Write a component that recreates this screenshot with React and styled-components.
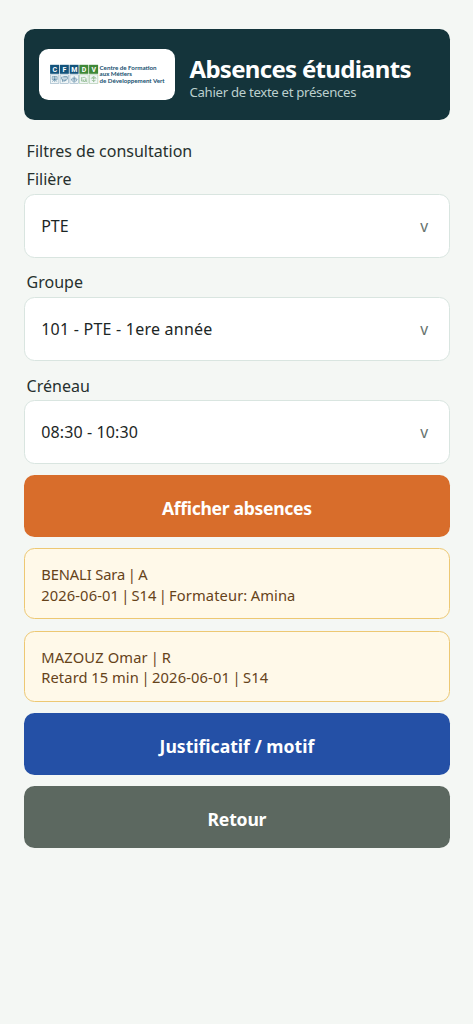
import React from 'react';
import styled, { createGlobalStyle } from 'styled-components';

const GlobalStyle = createGlobalStyle`
    * {
        box-sizing: border-box;
    }
    body {
        margin: 0;
        background: #f4f7f4;
        font-family: 'Noto Sans', 'Open Sans', sans-serif;
    }
`;

const Page = styled.main`
    min-height: 1024px;
    padding: 29px 23.4px 0 24.2px;
`;

const Header = styled.header`
    display: flex;
    align-items: center;
    gap: 14.3px;
    height: 90.6px;
    padding: 0 14.6px;
    border-radius: 10.5px;
    background: #14343b;
`;

const LogoBox = styled.div`
    display: flex;
    flex: none;
    width: 136.4px;
    height: 51.5px;
    border-radius: 9.5px;
    background: #fff;
`;

const Title = styled.h1`
    margin: 0;
    font-size: 24px;
    line-height: 28px;
    font-weight: 700;
    color: #fff;
    white-space: nowrap;
    letter-spacing: -0.7px;
`;

const Subtitle = styled.p`
    margin: 0;
    font-size: 13.2px;
    line-height: 18px;
    color: #bcd0ce;
    white-space: nowrap;
    letter-spacing: -0.31px;
`;

const HeaderText = styled.div`
    padding-top: 8px;
`;

const SectionTitle = styled.h2`
    margin: 17.8px 0 0 2.4px;
    font-size: 16px;
    line-height: 28px;
    font-weight: 400;
    color: #26302e;
`;

const Label = styled.div`
    margin-left: 2.4px;
    height: 28.7px;
    font-size: 16px;
    line-height: 28px;
    color: #26302e;
`;

const Field = styled.div`
    margin-bottom: 10.8px;
`;

const SelectBox = styled.div`
    display: flex;
    justify-content: space-between;
    align-items: center;
    height: 63.6px;
    padding: 0 20.5px 0 16px;
    border: 1.3px solid #d9e5e0;
    border-radius: 10.5px;
    background: #fff;
    font-size: 16px;
    letter-spacing: ${(props) => props.$spacing}px;
    color: #1c2625;
`;

const Arrow = styled.span`
    color: #66736f;
    font-size: 15.5px;
    letter-spacing: 0;
`;

const Actions = styled.section`
    display: flex;
    flex-direction: column;
    gap: 11.3px;
    padding-top: 0.6px;
`;

const Button = styled.button`
    width: 100%;
    height: 61.6px;
    padding: 4px 0 0;
    border: 0;
    border-radius: 10.5px;
    background: ${(props) => props.color};
    color: #fff;
    font-family: inherit;
    font-size: 17.6px;
    font-weight: 700;
    letter-spacing: ${(props) => props.$spacing || 0}px;
`;

const AbsenceCard = styled.article`
    height: 71.2px;
    padding: 15.2px 16px 0;
    border: 1.3px solid #edc873;
    border-radius: 10.5px;
    background: #fff9e9;
    color: #66431a;
    font-size: 14.7px;
    line-height: 20.5px;
`;

const AbsenceLine = styled.div`
    letter-spacing: ${(props) => props.$letter}px;
    word-spacing: ${(props) => props.$word}px;
`;

const Pipe = styled.span`
    margin: 0 -1.2px;
`;

const filters = [
    { label: 'Filière', value: 'PTE', spacing: 0 },
    { label: 'Groupe', value: '101 - PTE - 1ere année', spacing: 0.23 },
    { label: 'Créneau', value: '08:30 - 10:30', spacing: 0.12 },
];

const absences = [
    [
        { parts: ['BENALI Sara', 'A'], letter: -0.1, word: 0 },
        { parts: ['2026-06-01', 'S14', 'Formateur: Amina'], letter: 0.12, word: -0.7 },
    ],
    [
        { parts: ['MAZOUZ Omar', 'R'], letter: 0.16, word: 0 },
        { parts: ['Retard 15 min', '2026-06-01', 'S14'], letter: 0.12, word: -0.3 },
    ],
];

const tiles = [
    { letter: 'C', color: '#14547c' },
    { letter: 'F', color: '#14547c' },
    { letter: 'M', color: '#14547c' },
    { letter: 'D', color: '#3f8838' },
    { letter: 'V', color: '#3f8838' },
];

// small pictograms under each letter
const pictograms = [
    'M1.5 1.5h5v3h-5zM4 1v6M1.5 6.5l2.5-2 2.5 2M2 3h4',
    'M1 2h6v2H1zM2 4v3M6 4l-3 3M3 1.5h4M2 5.5h4',
    'M1 4h6l-1 2H2zM4 1v5M2 3h4M3 7h2',
    'M1.5 2v4h3M2 3c3-2 5 0 4 3-2 1-3 0-3-2M5 4l2 3',
    'M4 7V2M1.5 3.5L4 1l2.5 2.5M2 5l2 1 2-1M2 3h4',
];

const Logo = () => (
    <svg width='136.4' height='51.5' viewBox='39 48.5 136.4 51.5'>
        {tiles.map((tile, index) => (
            <g key={tile.letter} transform={`translate(${50.1 + index * 9.75} 64.3)`}>
                <rect width='9' height='9' fill={tile.color} />
                <text x='4.6' y='7' textAnchor='middle' fontFamily='Roboto, sans-serif' fontSize='7' fontWeight='700' fill='#fff'>
                    {tile.letter}
                </text>
                <rect x='0.3' y='10' width='8.5' height='8.7' fill='#f1f6f7' stroke={tile.color} strokeOpacity='0.45' strokeWidth='0.6' />
                <path d={pictograms[index]} transform='translate(0.6 10.3)' fill='none' stroke={tile.color} strokeOpacity='0.6' strokeWidth='0.7' />
            </g>
        ))}
        <g fontFamily='Lato, sans-serif' fontSize='6.3' fontWeight='700' fill='#16506f'>
            <text x='99.6' y='69.3' textLength='57' lengthAdjust='spacingAndGlyphs'>Centre de Formation</text>
            <text x='99.6' y='75.7' textLength='32.4' lengthAdjust='spacingAndGlyphs'>aux Métiers</text>
            <text x='99.6' y='82.3' textLength='65' lengthAdjust='spacingAndGlyphs'>de Développement Vert</text>
        </g>
    </svg>
);

const Select = ({ label, value, spacing }) => (
    <Field>
        <Label>{label}</Label>
        <SelectBox $spacing={spacing}>
            <span>{value}</span>
            <Arrow>v</Arrow>
        </SelectBox>
    </Field>
);

const App = () => {
    return (
        <Page>
            <GlobalStyle />
            <Header>
                <LogoBox>
                    <Logo />
                </LogoBox>
                <HeaderText>
                    <Title>Absences étudiants</Title>
                    <Subtitle>Cahier de texte et présences</Subtitle>
                </HeaderText>
            </Header>
            <SectionTitle>Filtres de consultation</SectionTitle>
            {filters.map((item) => (
                <Select key={item.label} label={item.label} value={item.value} spacing={item.spacing} />
            ))}
            <Actions>
                <Button color='#d86d2b' $spacing={-0.33}>
                    Afficher absences
                </Button>
                {absences.map((lines, index) => (
                    <AbsenceCard key={index}>
                        {lines.map((line) => (
                            <AbsenceLine key={line.parts[0]} $letter={line.letter} $word={line.word}>
                                {line.parts.map((part, i) => (
                                    <React.Fragment key={part}>
                                        {i > 0 && (
                                            <>
                                                {' '}
                                                <Pipe>|</Pipe>{' '}
                                            </>
                                        )}
                                        {part}
                                    </React.Fragment>
                                ))}
                            </AbsenceLine>
                        ))}
                    </AbsenceCard>
                ))}
                <Button color='#2450a6'>Justificatif / motif</Button>
                <Button color='#5c6860' $spacing={-0.2}>
                    Retour
                </Button>
            </Actions>
        </Page>
    );
};

export default App;
